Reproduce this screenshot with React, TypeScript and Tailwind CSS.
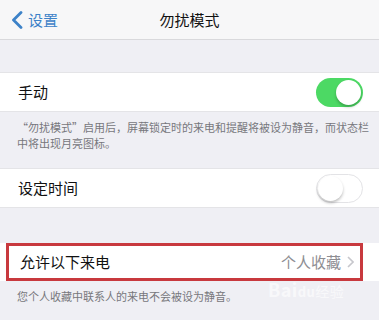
import React from "react";

const Toggle = ({ on }: { on: boolean }) => {
  return (
    <div
      className={
        on
          ? "w-[47px] h-[29px] rounded-full bg-[#4cd964] flex items-center justify-end p-[2px]"
          : "w-[47px] h-[29px] rounded-full bg-white border border-[#e3e3e6] flex items-center justify-start p-[1px]"
      }
    >
      <div className="w-[25px] h-[25px] rounded-full bg-white shadow-[0_2px_3px_rgba(0,0,0,0.25)]" />
    </div>
  );
};

const App = () => {
  return (
    <div
      className="w-[379px] h-[320px] bg-[#efeff4] overflow-hidden relative"
      style={{ fontFamily: '"Noto Sans CJK SC", "Noto Sans", sans-serif' }}
    >
      {/* nav */}
      <div className="h-[40px] bg-[#f7f7f8] border-b border-[#d9d9dc] flex items-center relative">
        <div className="flex items-center pl-[11px] gap-[5px] text-[#3d82c8]">
          <svg width="12" height="18" viewBox="0 0 12 18">
            <polyline
              points="10,1.5 2.5,9 10,16.5"
              fill="none"
              stroke="#3d82c8"
              strokeWidth="2.8"
              strokeLinecap="round"
              strokeLinejoin="round"
            />
          </svg>
          <span className="text-[15px] leading-none">设置</span>
        </div>
        <div className="absolute inset-x-0 text-center text-[15px] text-[#111] leading-none">
          勿扰模式
        </div>
      </div>

      <div className="h-[32px]" />

      <div className="h-[40px] bg-white flex items-center justify-between pl-[18px] pr-[16px] border-y border-[#e4e4e7]">
        <span className="text-[15px] text-[#111]">手动</span>
        <Toggle on />
      </div>

      <div className="h-[56px] pl-[17px] pr-[8px] pt-[7px] text-[11px] leading-[16px] text-[#77777c]">
        “勿扰模式”启用后，屏幕锁定时的来电和提醒将被设为静音，而状态栏中将出现月亮图标。
      </div>

      <div className="h-[40px] bg-white flex items-center justify-between pl-[18px] pr-[16px] border-y border-[#e4e4e7]">
        <span className="text-[15px] text-[#111]">设定时间</span>
        <Toggle on={false} />
      </div>

      <div className="h-[35px]" />

      <div className="h-[38px] bg-white flex items-stretch">
        <div className="ml-[6px] w-[357px] border-[3px] border-[#c8393e] flex items-center justify-between pl-[11px] pr-[6px]">
          <span className="text-[15px] text-[#111]">允许以下来电</span>
          <div className="flex items-center gap-[6px]">
            <span className="text-[15px] text-[#8e8e93]">个人收藏</span>
            <svg width="7" height="12" viewBox="0 0 7 12">
              <polyline
                points="1,1 6,6 1,11"
                fill="none"
                stroke="#c7c7cc"
                strokeWidth="1.6"
              />
            </svg>
          </div>
        </div>
      </div>

      <div className="px-[17px] pt-[7px] text-[11px] leading-[16px] text-[#77777c]">
        您个人收藏中联系人的来电不会被设为静音。
      </div>

      <div className="absolute left-[268px] top-[280px] text-[18px] font-bold text-white/60 leading-none tracking-wide">
        Bai<span className="text-[13px]">du</span>
        <span className="text-[14px] font-normal">经验</span>
      </div>
    </div>
  );
};

export default App;
